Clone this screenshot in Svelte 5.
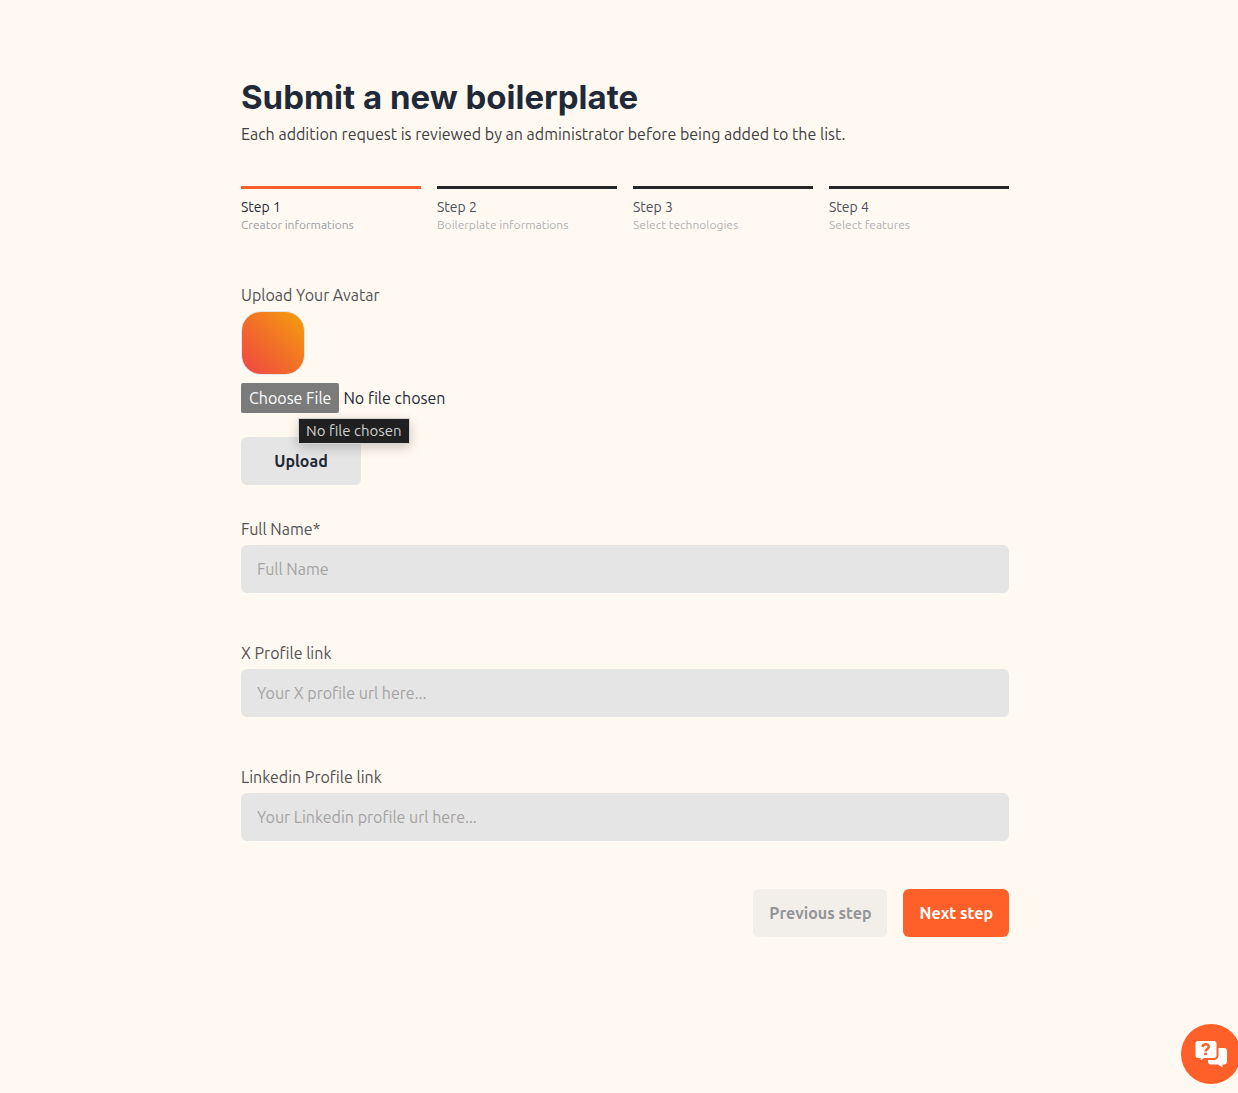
<script>
  const steps = [
    { title: 'Step 1', detail: 'Creator informations' },
    { title: 'Step 2', detail: 'Boilerplate informations' },
    { title: 'Step 3', detail: 'Select technologies' },
    { title: 'Step 4', detail: 'Select features' }
  ];
  const fields = [
    { id: 'full-name', label: 'Full Name*', placeholder: 'Full Name' },
    { id: 'x-link', label: 'X Profile link', placeholder: 'Your X profile url here...' },
    { id: 'linkedin-link', label: 'Linkedin Profile link', placeholder: 'Your Linkedin profile url here...' }
  ];
  const current = 0;
</script>

<main>
  <h1>Submit a new boilerplate</h1>
  <p class="intro">Each addition request is reviewed by an administrator before being added to the list.</p>

  <ol class="steps">
    {#each steps as step, i}
      <li class:active={i === current}>
        <span class="title">{step.title}</span>
        <span class="detail">{step.detail}</span>
      </li>
    {/each}
  </ol>

  <form>
    <section class="upload">
      <label for="avatar">Upload Your Avatar</label>
      <div class="avatar"></div>
      <div class="picker">
        <input id="avatar" type="file" />
        <div class="tooltip" role="tooltip">No file chosen</div>
      </div>
      <button type="button" class="btn upload-btn">Upload</button>
    </section>

    <div class="fields">
      {#each fields as field}
        <div class="field">
          <label for={field.id}>{field.label}</label>
          <input id={field.id} type="text" placeholder={field.placeholder} />
        </div>
      {/each}
    </div>

    <div class="actions">
      <button type="button" class="btn" disabled>Previous step</button>
      <button type="button" class="btn primary">Next step</button>
    </div>
  </form>
</main>

<button type="button" class="chat" aria-label="Open help chat">
  <svg viewBox="0 0 32 28" width="32" height="28" aria-hidden="true">
    <path fill="#fff" d="M16 8h13a3 3 0 0 1 3 3v10.500a3 3 0 0 1-3 3h-1.500v3l-4.500-3h-7a3 3 0 0 1-3-3V11a3 3 0 0 1 3-3z" />
    <path fill="#fff" stroke="#ff5f29" stroke-width="2" d="M3 0h16a3.500 3.500 0 0 1 3.500 3.500v12a3.500 3.500 0 0 1-3.500 3.500H9.500L4.700 22v-3H3A3.500 3.500 0 0 1-.5 15.500v-12A3.500 3.500 0 0 1 3 0z" />
    <path fill="none" stroke="#ff5f29" stroke-width="2.400" d="M7.400 7C7.800 4.900 9 4.200 10.700 4.200c1.900 0 3.100 1 3.100 2.600 0 2.200-3.200 2.200-3.200 4.600" />
    <rect x="9.300" y="12.700" width="2.600" height="2.500" fill="#ff5f29" />
  </svg>
</button>

<style>
  :global(body) {
    margin: 0;
    background: #fff9f2;
    color: #1f2937;
    font-family: Ubuntu, "Noto Sans", sans-serif;
    font-size: 16px;
    line-height: 24px;
  }
  main {
    box-sizing: border-box;
    max-width: 780px;
    margin: 0 auto;
    padding: 77px 0 48px 12px;
  }
  h1 {
    margin: 0 0 5px;
    font: 700 33px/40px Inter, sans-serif;
    color: #1f2937;
  }
  p { margin: 0; }
  .intro { color: #404040; }
  .steps {
    display: grid;
    grid-template-columns: repeat(4, 1fr);
    gap: 16px;
    margin: 40px 0 0;
    padding: 0;
    list-style: none;
  }
  .steps li {
    display: flex;
    flex-direction: column;
    padding-top: 8px;
    border-top: 3px solid #262626;
  }
  .steps li.active { border-color: #ff5f29; }
  .title {
    font-size: 14px;
    line-height: 20px;
    color: #4b4f58;
  }
  .active .title { color: #1f2937; }
  .detail {
    font-size: 12px;
    line-height: 16px;
    color: #b3b1b2;
  }
  .active .detail { color: #9d9da6; }
  form { margin-top: 50px; }
  label {
    display: block;
    margin-bottom: 4px;
    color: #525252;
  }
  .avatar {
    box-sizing: border-box;
    width: 64px;
    height: 64px;
    border: 1px solid #e5e5e5;
    border-radius: 20px;
    background: linear-gradient(45deg, #ef4444, #f59e0b);
  }
  .picker {
    position: relative;
    margin: 8px 0 24px;
  }
  input {
    font: inherit;
    color: #1f2937;
  }
  input[type="file"] {
    display: block;
    height: 30px;
    line-height: 30px;
  }
  input::file-selector-button {
    height: 30px;
    margin: 0 4px 0 0;
    padding: 0 8px;
    border: 0;
    border-radius: 2px;
    background: #7b7b7b;
    color: #fff;
    font: inherit;
  }
  .tooltip {
    position: absolute;
    top: 35px;
    left: 57px;
    padding: 0 7px;
    border: 1px solid #d4d4d4;
    background: #202020;
    color: #d0d0d0;
    font-size: 15px;
    box-shadow: 0 4px 12px rgb(0 0 0 / 20%);
  }
  .btn {
    height: 48px;
    padding: 0 16px;
    border: 0;
    border-radius: 6px;
    background: #e5e5e5;
    color: #1f2937;
    font: inherit;
    font-weight: 700;
  }
  .btn:disabled {
    background: #f2efea;
    color: #949599;
  }
  .upload-btn {
    display: block;
    min-width: 120px;
  }
  .btn.primary {
    background: #ff5f29;
    color: #fff;
  }
  .fields {
    display: grid;
    gap: 48px;
    margin-top: 32px;
  }
  .field input {
    box-sizing: border-box;
    display: block;
    width: 100%;
    height: 48px;
    padding: 0 16px;
    border: 0;
    border-radius: 6px;
    background: #e5e5e5;
  }
  .field input::placeholder { color: #a3a3a3; }
  .actions {
    display: flex;
    justify-content: flex-end;
    gap: 16px;
    margin-top: 48px;
  }
  .chat {
    position: fixed;
    right: -3px;
    bottom: 9px;
    display: grid;
    place-items: center;
    width: 60px;
    height: 60px;
    padding: 0;
    border: 0;
    border-radius: 50%;
    background: #ff5f29;
  }
  .chat svg { overflow: visible; }
</style>
